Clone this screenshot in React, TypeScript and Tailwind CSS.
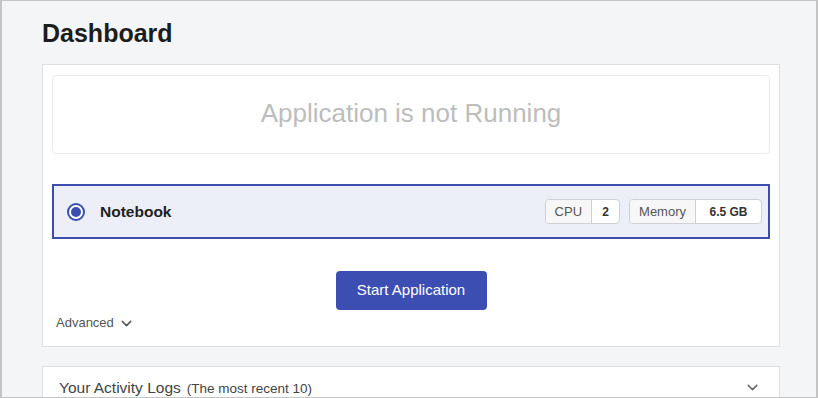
import { ChevronDown } from "lucide-react";

function Chip({ label, value, valueWidth }: { label: string; value: string; valueWidth: string }) {
  return (
    <div className="flex h-[25px] items-stretch overflow-hidden rounded-[4px] border border-[#cfcfd4] bg-white text-[13px]">
      <span className="flex items-center border-r border-[#cfcfd4] bg-[#f7f7f8] px-[9px] text-[#555]">
        {label}
      </span>
      <span className={`flex items-center justify-center ${valueWidth} text-[12px] font-bold text-[#333]`}>
        {value}
      </span>
    </div>
  );
}

export default function App() {
  return (
    <div
      className="h-[398px] w-[818px] overflow-hidden border-x-2 border-y border-[#c4c4c4] bg-[#f4f5f7] pl-[40px]"
      style={{ fontFamily: '"Liberation Sans", Arial, sans-serif' }}
    >
      {/* Title */}
      <h1 className="pt-[17px] text-[25px] font-bold leading-[30px] text-[#1d1d1d]">
        Dashboard
      </h1>

      {/* Application card */}
      <div className="mt-[16px] w-[738px] border border-[#e0e0e3] bg-white px-[9px] pb-[13px] pt-[10px]">
        <div className="flex h-[79px] items-center justify-center rounded-[4px] border border-[#ebebed] pb-[3px]">
          <span className="text-[26px] text-[#bdbdbd]">Application is not Running</span>
        </div>

        <div className="mt-[30px] flex h-[55px] items-center border-2 border-[#3c4db0] bg-[#eceef8] pl-[13px] pr-[6px]">
          <span className="grid h-[18px] w-[18px] place-items-center rounded-full border-2 border-[#3c4db0] bg-white">
            <span className="h-[10px] w-[10px] rounded-full bg-[#3c4db0]" />
          </span>
          <span className="ml-[15px] text-[15.5px] font-bold text-[#1f1f1f]">Notebook</span>
          <div className="ml-auto flex items-center gap-[9px]">
            <Chip label="CPU" value="2" valueWidth="w-[27px]" />
            <Chip label="Memory" value="6.5 GB" valueWidth="w-[65px]" />
          </div>
        </div>

        <div className="mt-[32px] flex justify-center">
          <button className="h-[39px] w-[151px] rounded-[4px] bg-[#3d4eb2] text-[15px] text-white">
            Start Application
          </button>
        </div>

        <div className="mt-[3px] flex items-center gap-[4px] pl-[4px] text-[13px] text-[#555]">
          Advanced
          <ChevronDown size={17} strokeWidth={2} className="mt-[2px] text-[#555]" />
        </div>
      </div>

      {/* Activity logs card */}
      <div className="mt-[19px] flex h-[60px] w-[738px] items-start justify-between border border-[#e0e0e3] bg-white pl-[16px] pr-[18px] pt-[9px]">
        <div className="text-[#444]">
          <span className="text-[15.5px]">Your Activity Logs</span>
          <span className="ml-[6px] text-[13.5px]">(The most recent 10)</span>
        </div>
        <ChevronDown size={17} strokeWidth={2} className="mt-[3px] text-[#666]" />
      </div>
    </div>
  );
}
